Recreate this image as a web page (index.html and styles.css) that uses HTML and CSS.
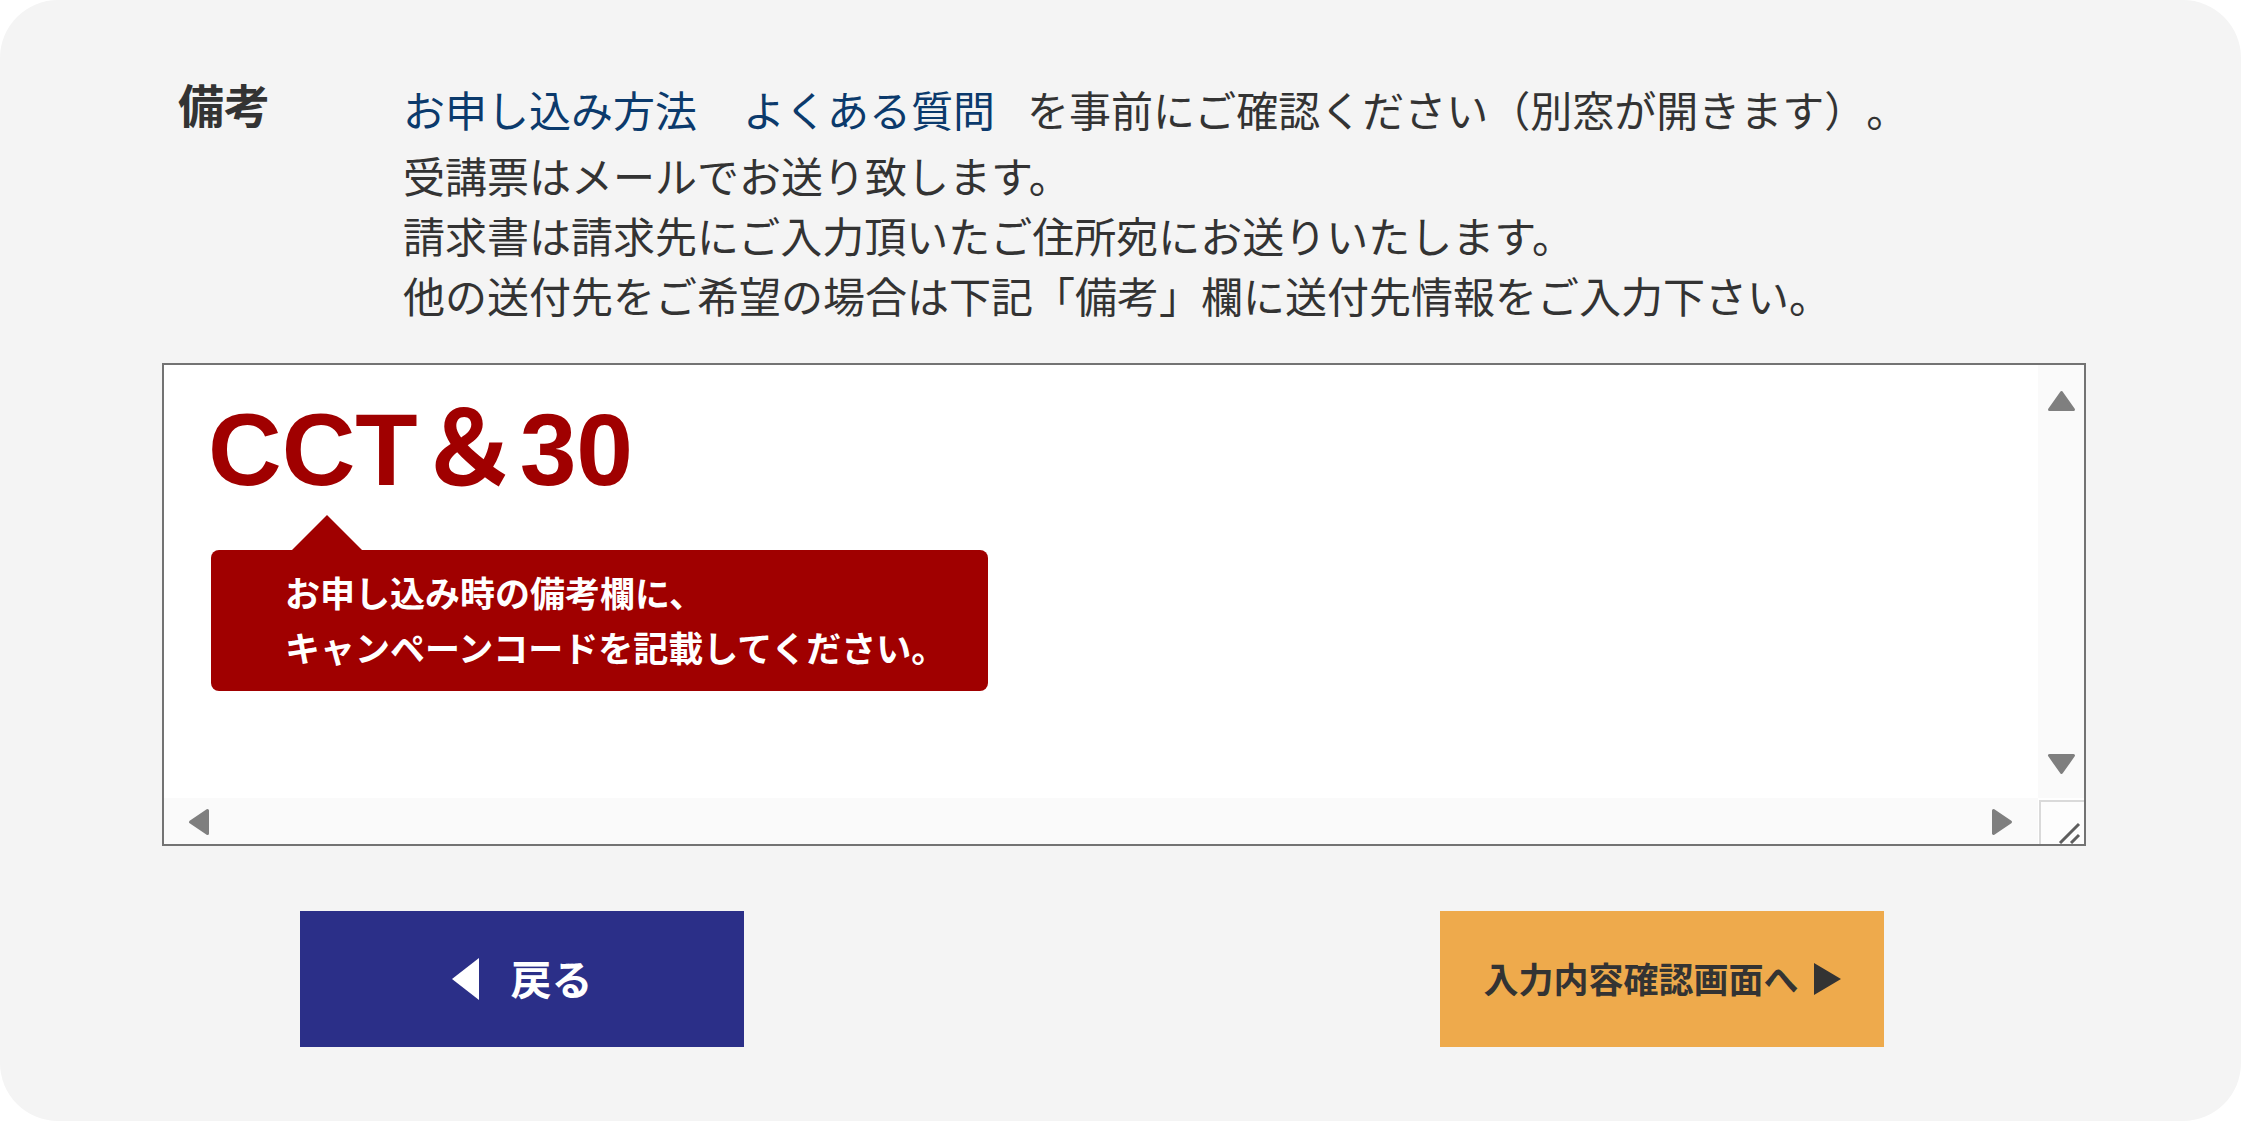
FILE: index.html
```html
<!DOCTYPE html>
<html lang="ja">
<head>
<meta charset="utf-8">
<title>備考</title>
<link rel="stylesheet" href="styles.css">
</head>
<body>
<div class="card">
  <div class="remarks-row">
    <div class="label">備考</div>
    <div class="notes">
      <p class="note first"><a class="link link-a" href="#">お申し込み方法</a><a class="link link-b" href="#">よくある質問</a>を事前にご確認ください（別窓が開きます）。</p>
      <p class="note">受講票はメールでお送り致します。</p>
      <p class="note">請求書は請求先にご入力頂いたご住所宛にお送りいたします。</p>
      <p class="note">他の送付先をご希望の場合は下記「備考」欄に送付先情報をご入力下さい。</p>
    </div>
  </div>

  <div class="textbox">
    <div class="textbox-content">
      <div class="code">CCT＆30</div>
      <div class="tip">お申し込み時の備考欄に、<br>キャンペーンコードを記載してください。</div>
    </div>
    <div class="vbar">
      <svg class="arrow-v" width="29" height="22" viewBox="0 0 29 22"><polygon points="14.5,2.5 26.5,19.5 2.5,19.5"/></svg>
      <svg class="arrow-v" width="29" height="22" viewBox="0 0 29 22"><polygon points="2.5,2.5 26.5,2.5 14.5,19.5"/></svg>
    </div>
    <div class="hbar">
      <svg class="arrow-h" width="22" height="28" viewBox="0 0 22 28"><polygon points="19.5,2.5 19.5,25.5 2.5,14"/></svg>
      <svg class="arrow-h" width="22" height="28" viewBox="0 0 22 28"><polygon points="2.5,2.5 19.5,14 2.5,25.5"/></svg>
    </div>
    <div class="corner">
      <svg width="46" height="46" viewBox="0 0 46 46"><line x1="22" y1="44" x2="41" y2="25"/><line x1="33" y1="44" x2="41" y2="36"/></svg>
    </div>
  </div>

  <div class="buttons">
    <a class="btn btn-back" href="#">
      <svg width="27" height="42" viewBox="0 0 27 42"><polygon points="27,0 27,42 0,21"/></svg>
      <span>戻る</span>
    </a>
    <a class="btn btn-next" href="#">
      <span>入力内容確認画面へ</span>
      <svg width="27" height="32" viewBox="0 0 27 32"><polygon points="0,0 27,16 0,32"/></svg>
    </a>
  </div>
</div>
</body>
</html>
```

FILE: styles.css
```css
html, body {
  margin: 0;
  padding: 0;
  background: #ffffff;
}

body {
  font-family: "Noto Sans CJK JP", "Noto Sans", sans-serif;
  color: #333333;
  text-spacing-trim: space-all;
}

.card {
  width: 2241px;
  height: 1121px;
  box-sizing: border-box;
  background: #f4f4f4;
  border-radius: 58px;
  padding-top: 79px;
  overflow: hidden;
}

.remarks-row {
  display: flex;
  padding-left: 178px;
}

.label {
  flex: 0 0 225px;
  font-size: 46px;
  font-weight: 700;
  line-height: 60px;
  margin-top: -6px;
  color: #333333;
}

.notes {
  font-size: 42px;
  line-height: 60px;
}

.note {
  margin: 0;
  white-space: nowrap;
}

.note.first {
  margin-bottom: 6px;
}

.link {
  color: #0b3a6c;
  text-decoration: none;
}

.link-a {
  margin-right: 46px;
}

.link-b {
  margin-right: 32px;
}

.textbox {
  margin-top: 38px;
  margin-left: 162px;
  width: 1924px;
  height: 483px;
  box-sizing: border-box;
  border: 2px solid #737373;
  background: #ffffff;
  display: grid;
  grid-template-columns: 1fr 46px;
  grid-template-rows: 1fr 46px;
}

.textbox-content {
  padding: 34px 0 0 44px;
  overflow: hidden;
}

.code {
  font-family: "Liberation Sans", "Noto Sans CJK JP", sans-serif;
  font-weight: 700;
  font-size: 102px;
  line-height: 1;
  color: #a00000;
  white-space: nowrap;
}

.tip {
  position: relative;
  margin-top: 49px;
  margin-left: 3px;
  width: 777px;
  height: 141px;
  box-sizing: border-box;
  padding: 14px 0 0 74px;
  background: #a00000;
  border-radius: 8px;
  color: #ffffff;
  font-size: 35px;
  font-weight: 700;
  line-height: 55px;
  white-space: nowrap;
}

.tip::before {
  content: "";
  position: absolute;
  left: 81px;
  top: -35px;
  border-left: 35px solid transparent;
  border-right: 35px solid transparent;
  border-bottom: 35px solid #a00000;
}

.vbar {
  background: #fafafa;
  display: flex;
  flex-direction: column;
  justify-content: space-between;
  align-items: center;
  padding: 25px 0 23px;
}

.hbar {
  background: #fafafa;
  display: flex;
  justify-content: space-between;
  align-items: center;
  padding: 2px 25px 0 24px;
}

.arrow-v polygon,
.arrow-h polygon {
  fill: #7f7f7f;
  stroke: #7f7f7f;
  stroke-width: 3;
  stroke-linejoin: round;
}

.corner {
  background: #fdfdfd;
  border-left: 2px solid #dadada;
  border-top: 2px solid #dadada;
  margin-left: 1px;
  margin-top: 2px;
  position: relative;
  overflow: hidden;
}

.corner svg {
  display: block;
  margin: -3px 0 0 -3px;
}

.corner line {
  stroke: #5e5e5e;
  stroke-width: 3;
}

.buttons {
  display: flex;
  gap: 696px;
  margin-top: 65px;
  padding-left: 300px;
}

.btn {
  width: 444px;
  height: 136px;
  display: flex;
  align-items: center;
  justify-content: center;
  text-decoration: none;
  font-weight: 700;
  line-height: 1;
}

.btn-back {
  background: #2b2f88;
  color: #ffffff;
  font-size: 41px;
  gap: 32px;
}

.btn-back svg polygon {
  fill: #ffffff;
}

.btn-next {
  background: #eeaa4c;
  color: #333333;
  font-size: 35px;
  gap: 15px;
}

.btn-next svg polygon {
  fill: #333333;
}

.btn span {
  display: block;
  margin-top: -3px;
}
```
